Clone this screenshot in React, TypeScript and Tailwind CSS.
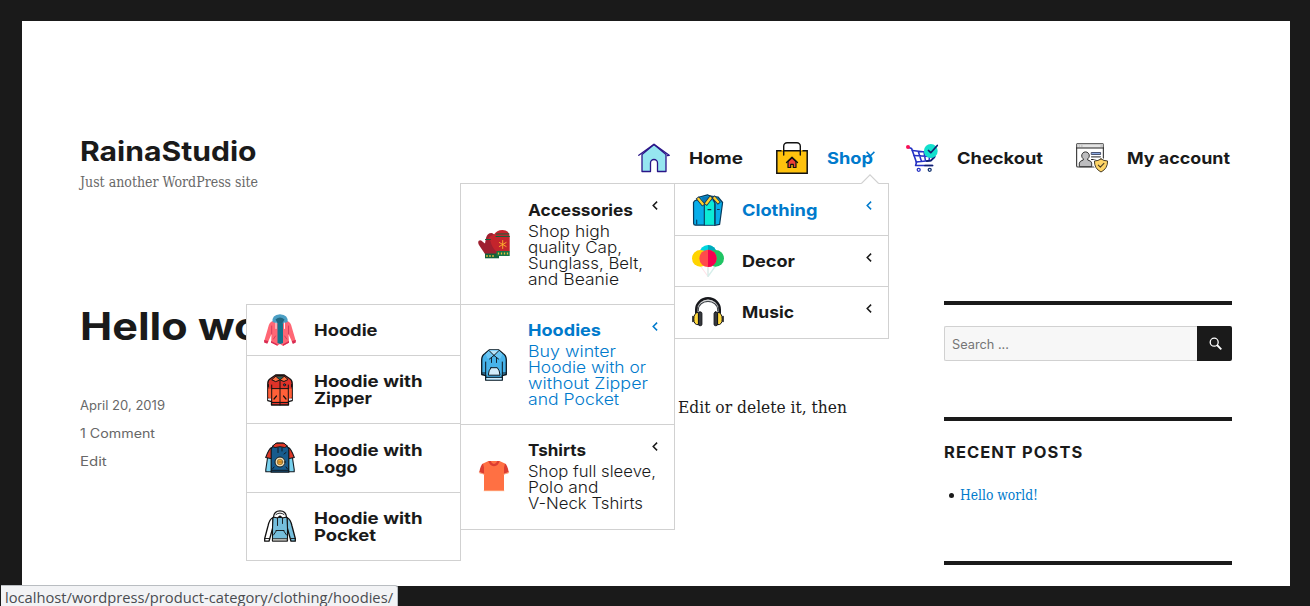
import type { ReactNode } from "react";

function Icon({ children }: { children: ReactNode }) {
  return (
    <svg viewBox="0 0 32 32" className="h-8 w-8 shrink-0" fill="none" strokeLinejoin="round" strokeLinecap="round">
      {children}
    </svg>
  );
}

const HomeIcon = () => (
  <Icon>
    <path d="M4 12.5V29.5H12.5V21a3.5 3.5 0 0 1 7 0v8.5H28V12.5L16 2.5Z" fill="#96e6f0" stroke="#2a1588" strokeWidth="1.3" />
    <path d="M.8 13.3 16 2.2l15.2 11.1-1.8.4" stroke="#2a1588" strokeWidth="1.3" />
  </Icon>
);

const BagIcon = () => (
  <Icon>
    <path d="M.8 8.7h30.4v22.5H.8Z" fill="#ffc20e" stroke="#111" strokeWidth="1.5" strokeLinejoin="miter" />
    <path d="M5.5 8.7h2M24.500 8.7h2" stroke="#ffc20e" strokeWidth="1.6" strokeLinecap="butt" />
    <path d="M7.7 13V4.2A3.4 3.4 0 0 1 11.1.8h9.8a3.4 3.4 0 0 1 3.4 3.4V13" stroke="#111" strokeWidth="1.4" />
    <path d="M12 19.500V25.500h2.700v-3.200h2.600v3.200H20V19.500L16 15.700Z" fill="#ee4036" stroke="#111" strokeWidth="1.200" />
    <path d="m10.500 20.500 5.500-5.300 5.500 5.300" stroke="#111" strokeWidth="1.300" />
  </Icon>
);

const CartIcon = () => (
  <Icon>
    <path d="M2 5.200 5.600 6.600 10.500 20.600 9.600 23.500H26.500" stroke="#2531c4" strokeWidth="1.600" />
    <path d="M6.300 8.500 19 10M28.500 15.500 24.800 18.600 10 20M8 13.500l12 .8 7 .8M12.300 9.500l3.200 10M18 10l1.500 9.200M23.500 15l-.5 3.800" stroke="#2531c4" strokeWidth="1.500" />
    <path d="M19 23.500h7.500M28.800 14.500l-4 4.200-4 .4" stroke="#10206e" strokeWidth="1.700" />
    <circle cx="2" cy="5" r="2" fill="#fa0f54" />
    <circle cx="12.700" cy="27.800" r="1.500" stroke="#2531c4" strokeWidth="1.300" />
    <circle cx="23.700" cy="27.800" r="1.500" stroke="#10306e" strokeWidth="1.300" />
    <circle cx="24.800" cy="9" r="6.900" fill="#12e0cd" />
    <path d="m22.500 8.500 2.300 2.200L31.300 3.500" stroke="#10206e" strokeWidth="1.700" />
  </Icon>
);

const AccountIcon = () => (
  <Icon>
    <rect x=".6" y="1.600" width="26.800" height="23.400" rx="1.300" fill="#fff" stroke="#444" strokeWidth="1.200" />
    <path d="M.8 5.600V3q0-1.300 1.300-1.300H26q1.300 0 1.300 1.300v2.600Z" fill="#c9c9c9" />
    <path d="M.7 6h26.600" stroke="#222" />
    <path d="M2.300 4h.1M4.500 4h.1M7 4h17" stroke="#fff" />
    <path d="M3.300 24.300v-3.200q.5-2.300 4-3.100v-1.200a3.800 3.800 0 1 1 4.400 0V18q3.700.8 4 3.100v3.200Z" fill="#bdbdbf" stroke="#333" strokeWidth="1" />
    <path d="M15.600 10.500h9v2h-9Z" fill="#8ba9e0" stroke="#2b3350" strokeWidth=".8" />
    <path d="M15.500 14.900h9M15.500 17.500h4.500" stroke="#222" />
    <path d="M25 16.800q-3 2-6.800 2 0 8 6.800 11.200 6.800-3.200 6.800-11.200-3.800 0-6.800-2Z" fill="#ffd566" stroke="#fff" strokeWidth="2.500" />
    <path d="M25 17q-3 2-6.600 2 0 7.800 6.600 11 6.600-3.200 6.600-11-3.600 0-6.600-2Z" fill="#ffd566" stroke="#453a25" strokeWidth="1" />
    <path d="m22.300 23.200 2 2 3.600-3.800" stroke="#453a25" strokeWidth="1.100" />
  </Icon>
);

const ShirtsIcon = () => (
  <Icon>
    <path d="M15 1.500 26 3l4.600 5.500-3 21.800-5 1V7Z" fill="#08aeea" stroke="#073a5c" strokeWidth="1.200" />
    <path d="M1.500 8.500Q2 6.500 5 5.800L7.500 3l8-2.200L20 3l2.800 6v20.500q0 1.700-1.200 1.700H3.500q-1.900 0-1.900-1.700Z" fill="#08aeea" stroke="#073a5c" strokeWidth="1.200" />
    <path d="M12.300 11 20 6.500l2.500 3.500v20.700H12.300Z" fill="#0cebd6" />
    <path d="M12.300 11v20M22.800 10v20M4.700 26v4" stroke="#073a5c" strokeWidth="1.100" />
    <path d="m9 3.500 7-1.500 2 1.500-5.500 7Z" fill="#0878b8" />
    <path d="m6.500 5 4 4.800M18.300 4.200l-3.800 5M22.500 4l3.500 4" stroke="#173652" strokeWidth="4" strokeLinecap="square" />
    <path d="m6.500 5 4 4.800M18.300 4.200l-3.800 5M22.500 4l3.500 4" stroke="#ffd02c" strokeWidth="2.300" strokeLinecap="square" />
    <path d="M16 15.700h2.800M25.500 15.500h1.800" stroke="#173652" strokeWidth="1.200" />
  </Icon>
);

const BalloonsIcon = () => (
  <Icon>
    <path d="m8.500 21 7.500 10.500v-11" stroke="#ffe3e8" strokeWidth="1.100" />
    <path d="M16 20.500v11L23.500 21" stroke="#d6eeea" strokeWidth="1.300" />
    <circle cx="16" cy="8.700" r="8.600" fill="#00d6df" />
    <path d="M16 .1a8.600 8.600 0 0 1 0 17.200Z" fill="#00a9bb" />
    <circle cx="8.400" cy="13.400" r="8.400" fill="#ffd400" />
    <circle cx="23.600" cy="13.400" r="8.400" fill="#20c464" />
    <circle cx="16" cy="13.400" r="8.600" fill="#ff4b4b" />
    <path d="M16 4.800a8.600 8.600 0 0 1 0 17.200Z" fill="#f5004f" />
  </Icon>
);

const HeadphonesIcon = () => (
  <Icon>
    <path d="M4.300 17v-3.500a11.700 11.200 0 0 1 23.400 0V17" stroke="#16171b" strokeWidth="2.600" />
    <path d="M6.300 15v-1.500a9.700 8.200 0 0 1 19.400 0V15" stroke="#42464b" strokeWidth="1.200" />
    <path d="M5.500 11A11 9.500 0 0 1 26.500 11" stroke="#a7a9aa" strokeWidth=".5" />
    <path d="M1 20.500v5M31 20.500v5" stroke="#16171b" strokeWidth="1.600" />
    <path d="M6 16.300Q1.800 17 1.800 23T6 28.700ZM26 16.300q4.200.7 4.200 6.700T26 28.700Z" fill="#ffd83c" stroke="#16171b" strokeWidth="1" />
    <rect x="6.500" y="16" width="3.400" height="13.700" rx="1.400" fill="#35383d" stroke="#16171b" />
    <rect x="22.100" y="16" width="3.400" height="13.700" rx="1.400" fill="#35383d" stroke="#16171b" />
  </Icon>
);

const MittensIcon = () => (
  <Icon>
    <path d="M7 26 1.300 17.500Q-.6 14.500.8 12.800 2.700 11 5 14l2 1.500L8 10q1.500-5.500 6.500-4.800L21 10v16Z" fill="#9f2030" />
    <path d="M12.300 12.500Q8.500 11 12 8.500l4-2Q18.500 2 24.500 1.900 31.500 2 31.700 9v14.500H18.500q-4.500-3.500-6.200-11Z" fill="#c4242c" />
    <path d="M7.500 11.500h5M18.500 6l12.500-.1M18 8.500l13.500-.1" stroke="#12613a" strokeWidth="1" />
    <path d="M7 25.500h14v4.800H7Z" fill="#12613a" />
    <path d="M18.500 23h13.200v5H18.500Z" fill="#167545" />
    <path d="M9 27v2M12 27v2M15 27v2M20.500 24.500v2M23.500 24.500v2M26.500 24.500v2M29.500 24.500v2" stroke="#e8bc3b" strokeWidth="1.300" strokeLinecap="butt" />
    <path d="M24.700 12.500v8M21.300 14.500l6.800 4M28.100 14.500l-6.800 4" stroke="#ffb52c" strokeWidth=".9" />
  </Icon>
);

const BlueHoodieIcon = () => (
  <Icon>
    <path d="m11.500 .8 9 0 4.500 3.700q3.300 2 3.300 6.500v14.500l-4 1V31.200H7.700V26.500l-4-1V11Q3.700 6.500 7 4.500Z" fill="#47b3ea" stroke="#0b1720" strokeWidth="1.300" />
    <path d="M8.300 29h15.400v1.600H8.300Z" fill="#d3edfa" />
    <path d="M4 24h3.500M24.500 24H28M7.700 13v14M24.300 13v14M7.700 28.300h16.600" stroke="#0b1720" strokeWidth="1" />
    <path d="M7.500 5 11.500 1h9l4 4-2 4.500h-4L16 6.800l-2.500 2.700h-4Z" fill="#6cc6f3" />
    <path d="M11 1.800h10L16 6.500Z" fill="#b9e3f6" />
    <path d="m11 1.500 5 5 5-5M16 6.500 11.500 10M16 6.500l4.500 3.500" stroke="#0b1720" strokeWidth="1" />
    <path d="M13.500 9v4.500M18.500 9v4.500" stroke="#0b1720" strokeWidth=".9" />
    <path d="M13 18.700h6.300q2.400 2.500 2.700 7.500H10.300q.2-5 2.700-7.500Z" fill="#d3edfa" stroke="#0b1720" strokeWidth="1" />
  </Icon>
);

const TshirtIcon = () => (
  <Icon>
    <path d="M10.500 1 5 3.500 1 13l5 1.500V31h20V14.500l5-1.500L27 3.500 21.500 1Z" fill="#ff7043" />
    <path d="M5 3.500Q2.500 5 1.300 12.200L6 14V7.500ZM27 3.500q2.500 1.500 3.700 8.700L26 14V7.500ZM10.500 1q1 5 5.500 5.200Q20.500 6 21.500 1h-2.300q-.7 2.800-3.200 2.900Q13.500 3.800 12.800 1Z" fill="#dc3d31" />
    <path d="m1.200 12.400 4.800 1.800M30.800 12.400 26 14.200M6 30.800h20" stroke="#ffc29b" strokeWidth=".7" />
  </Icon>
);

const PinkHoodieIcon = () => (
  <Icon>
    <path d="M9 7q-4 1-5 7L.2 27l3.500 2L7.500 20l-.3 8 6 3.800L16 30l3 2 6-3.500-.5-8.500 4 9 3.300-2L28 14q-1-6-5-7l-7-2Z" fill="#ff6775" />
    <path d="m.2 26-.1 2.500 3.200 1.300 1-2.800Zm31.600 0v2.500l-3 1.500-1-3ZM7 27l6.500 3.300v1.500l-6.500-3Zm18 0-6 3.300v1.500l6-3Z" fill="#d92c52" />
    <path d="M7.700 20V12M24.500 20V12M9.500 25l2-3M22.700 25l-2-3" stroke="#cc3655" strokeWidth=".8" />
    <path d="M13.500 7h5.500v22l-2.500 1-3-1Z" fill="#13748d" />
    <path d="M8.500 8Q7.500 1 16 .2 24.500 1 23.700 8l-5 1.500L16 5.500 13.300 9.500Z" fill="#4b9fc4" />
    <path d="M11.500 5.500Q16 1.500 20.500 5.500L18.500 9h-5Z" fill="#23677f" />
    <path d="M12 9v5.500M20.500 9v5.500" stroke="#fff" strokeWidth=".9" />
  </Icon>
);

const ZipperHoodieIcon = () => (
  <Icon>
    <path d="M6.500 4.500 12 .8h8l5.500 3.700q2.700 1.500 2.700 5v17L24.500 27.500V31h-17V27.500L3.800 26.500v-17q0-3.500 2.700-5Z" fill="#df3329" stroke="#131313" strokeWidth="1.300" />
    <path d="M7.700 14.500h16.600v13H7.700Z" fill="#ff6038" />
    <path d="m4.200 14.500 3.500.5v9l-3.500-.5ZM27.800 14.500l-3.500.5v9l3.500-.5Z" fill="#ff6038" />
    <path d="M4 24.500h3v2.300L4 26ZM28 24.500h-3v2.300l3-.8Z" fill="#dcf0f7" />
    <path d="M7.700 11v17M24.300 11v17M8 14.600h16.300M8 28.500h16M16 7v24" stroke="#131313" strokeWidth="1" />
    <path d="m8 5.500 4.500-4h7l4.500 4-4 2L16 6 12 7.500Z" fill="#ff7040" stroke="#131313" strokeWidth="1" />
    <path d="m12 2.500 4 3.500 4-3.500Z" fill="#225b52" stroke="#131313" strokeWidth=".8" />
    <path d="m10 25 2.500-3M22 25l-2.500-3M4.300 10.500v2M27.700 10.500v2" stroke="#131313" strokeWidth="1.200" />
    <circle cx="20.500" cy="10.800" r="1.100" fill="#3b597b" stroke="#131313" strokeWidth=".8" />
  </Icon>
);

const LogoHoodieIcon = () => (
  <Icon>
    <path d="m3.800 14-2 13.500v2.200h5.500l2-13ZM28.200 14l2 13.500v2.200h-5.500l-2-13Z" fill="#79d2ef" stroke="#121a21" strokeWidth="1.100" />
    <path d="M7.500 5.500Q5 6.500 1.700 15.500l6 1.300ZM24.500 5.500q2.500 1 5.800 10l-6 1.300Z" fill="#dd3827" stroke="#121a21" strokeWidth="1.100" />
    <path d="m9 4 4-2.800h6L23 4l1.800 3v23.200H7.200V7Z" fill="#175b8d" stroke="#121a21" strokeWidth="1.200" />
    <path d="M8.500 4.200 12 1.200h8l3.500 3-3 1.300-4.500-.8-4.500.8Z" fill="#dd3827" stroke="#121a21" strokeWidth="1" />
    <path d="M14 6v4.500M18 6v3M7.500 28.300h17M20 12l2-1.500M10 25l-1.500 2M22 25l1.500 2" stroke="#121a21" strokeWidth="1" />
    <circle cx="16" cy="20" r="5" fill="#f7e5bd" stroke="#121a21" strokeWidth="1" />
    <circle cx="16" cy="20" r="2.800" fill="#efa62b" stroke="#6b5a37" strokeWidth=".7" />
    <path d="M14.500 20h3" stroke="#834d20" strokeWidth=".7" />
  </Icon>
);

const PocketHoodieIcon = () => (
  <Icon>
    <path d="M9 7.500Q5.500 9 4 16L.7 28.500v2.700H5L8.700 18Z" fill="#fff" stroke="#111" strokeWidth="1.300" />
    <path d="M23 7.500Q26.500 9 28 16l3.300 12.500v2.700H27L23.300 18Z" fill="#75bedc" stroke="#111" strokeWidth="1.300" />
    <path d="M9 7.500h14l.5 11V31h-15V18.500Z" fill="#75bedc" stroke="#111" strokeWidth="1.100" />
    <path d="M8.800 28.700h14.400V31H8.800Z" fill="#d2d3ce" stroke="#111" strokeWidth=".8" />
    <path d="M9.500 7Q10 .8 16 .8T22.500 7L18.500 8 16 6l-2.500 2Z" fill="#fff" stroke="#111" strokeWidth="1.200" />
    <path d="M12 4.500Q16 1.500 20 4.500M13.500 8.500v7M18.500 8.500v5M12 20.500h8M9.500 25l2.700-4M22.500 25l-2.700-4M.8 28.500h4.500M27 28.500h4.300" stroke="#111" strokeWidth=".9" />
  </Icon>
);

function Chevron({ active }: { active?: boolean }) {
  return (
    <svg
      viewBox="0 0 6 9"
      className={`absolute right-4 top-[17px] h-[9px] w-[6px] ${active ? "text-[#007acc]" : "text-[#1a1a1a]"}`}
      fill="none"
    >
      <path d="M5.100 .6 1.200 4.500 5.100 8.400" stroke="currentColor" strokeWidth="1.500" />
    </svg>
  );
}

function T({ s, children }: { s: string; children: ReactNode }) {
  return <span className={`block w-max origin-left whitespace-nowrap ${s}`}>{children}</span>;
}

type Line = [string, string];

function Row({
  icon,
  iconPad,
  textPad = "pt-[17px]",
  title,
  desc = [],
  active,
  arrow,
}: {
  icon: ReactNode;
  iconPad: string;
  textPad?: string;
  title: Line[];
  desc?: Line[];
  active?: boolean;
  arrow?: boolean;
}) {
  return (
    <li
      className={`relative flex items-start gap-[18px] border-b border-[#d1d1d1] pl-[17px] ${active ? "text-[#007acc]" : "text-[#1a1a1a]"}`}
    >
      <div className={`shrink-0 ${iconPad}`}>{icon}</div>
      <div className={textPad}>
        <div className="text-[16.5px] leading-[17px] font-bold">
          {title.map(([text, s]) => (
            <T key={text} s={s}>{text}</T>
          ))}
        </div>
        {desc.length > 0 && (
          <div className="mt-[5px] text-[15.5px] leading-4 font-light">
            {desc.map(([text, s]) => (
              <T key={text} s={s}>{text}</T>
            ))}
          </div>
        )}
      </div>
      {arrow && <Chevron active={active} />}
    </li>
  );
}

const menuBase = "absolute z-10 grid w-[215px] border border-b-0 border-[#d1d1d1] bg-white";

export default function App() {
  return (
    <div className="relative h-[606px] w-[1310px] overflow-hidden bg-[#1a1a1a] pt-[21px] pr-5 pb-5 pl-[22px] font-['Inter',sans-serif] text-[#1a1a1a]">
      <div className="h-[565px] bg-white pl-[58px] pr-[58px]">
        <header className="flex justify-between pt-[114px]">
          <div>
            <h1 className="text-[27px] leading-[34px] font-bold">
              <T s="scale-x-[1.115]">RainaStudio</T>
            </h1>
            <p className="mt-[3px] font-['DejaVu_Serif_Condensed','DejaVu_Serif',serif] text-[14px] leading-[20px] text-[#686868] [font-stretch:condensed]">
              <T s="scale-x-[1]">Just another WordPress site</T>
            </p>
          </div>
          <nav className="mr-[2px] mt-[7px] flex h-8 text-[16.5px] leading-8 font-bold">
            <a className="flex w-[138px] gap-[19px]">
              <HomeIcon />
              <T s="scale-x-[1.141]">Home</T>
            </a>
            <a className="relative flex w-[130px] gap-[19px] text-[#007acc]">
              <BagIcon />
              <T s="scale-x-[1.106]">Shop</T>
              <svg viewBox="0 0 9 6" className="absolute left-[90px] top-[9px] h-[6px] w-[9px]" fill="none">
                <path d="M.6 .9 4.500 4.800 8.400 .9" stroke="currentColor" strokeWidth="1.500" />
              </svg>
            </a>
            <a className="flex w-[170px] gap-[19px]">
              <CartIcon />
              <T s="scale-x-[1.107]">Checkout</T>
            </a>
            <a className="flex w-[154px] gap-[19px]">
              <AccountIcon />
              <T s="scale-x-[1.083]">My account</T>
            </a>
          </nav>
        </header>

        <div className="flex pt-[109px]">
          <main className="w-[864px] pt-px">
            <h2 className="text-[38.500px] leading-[48px] font-bold">
              <T s="scale-x-[1.120]">Hello world!</T>
            </h2>
            <div className="mt-[42px] flex">
              <div className="w-[598px] text-[12.500px] leading-[28px] text-[#686868]">
                <T s="scale-x-[1.044]">April 20, 2019</T>
                <T s="scale-x-[1.138]">1 Comment</T>
                <T s="scale-x-[1.200]">Edit</T>
              </div>
              <p className="pt-px font-['DejaVu_Serif_Condensed','DejaVu_Serif',serif] text-[17px] leading-[28px] [font-stretch:condensed]">
                <T s="scale-x-[1.014]">Edit or delete it, then</T>
              </p>
            </div>
          </main>
          <aside className="w-[288px]">
            <section className="h-[116px] border-t-4 border-[#1a1a1a] pt-[21px]">
              <div className="flex h-[35px]">
                <div className="flex-1 rounded-l-[2px] border border-r-0 border-[#d1d1d1] bg-[#f7f7f7] pl-[7px] text-[12.500px] leading-[35px] text-[#757575]">
                  <T s="scale-x-[1.021]">Search ...</T>
                </div>
                <div className="flex w-[35px] items-center justify-center rounded-r-[2px] bg-[#1a1a1a]">
                  <svg viewBox="0 0 13 13" className="ml-[2px] h-[13px] w-[13px]" fill="none" stroke="#fff">
                    <circle cx="5.200" cy="5.200" r="4" strokeWidth="1.300" />
                    <path d="m8 8 4.300 4.300" strokeWidth="1.800" />
                  </svg>
                </div>
              </div>
            </section>
            <section className="h-[144px] border-t-4 border-[#1a1a1a] pt-[22px]">
              <h3 className="text-[15.500px] leading-[20px] font-bold tracking-[1px]">
                <T s="scale-x-[1.064]">RECENT POSTS</T>
              </h3>
              <div className="mt-[22px] flex items-center gap-[6px] pl-[5px] font-['DejaVu_Serif_Condensed','DejaVu_Serif',serif] text-[14px] leading-[20px] [font-stretch:condensed]">
                <span className="h-[5px] w-[5px] rounded-full bg-[#1a1a1a]" />
                <span className="text-[#007acc]">
                  <T s="scale-x-[0.980]">Hello world!</T>
                </span>
              </div>
            </section>
            <div className="h-1 bg-[#1a1a1a]" />
          </aside>
        </div>
      </div>

      <ul className={`${menuBase} left-[674px] top-[183px] grid-rows-[52px_51px_52px]`}>
        <Row icon={<ShirtsIcon />} iconPad="pt-[10px]" textPad="pt-[18px]" title={[["Clothing", "scale-x-[1.105]"]]} active arrow />
        <Row icon={<BalloonsIcon />} iconPad="pt-[9px]" title={[["Decor", "scale-x-[1.097]"]]} arrow />
        <Row icon={<HeadphonesIcon />} iconPad="pt-[9px]" title={[["Music", "scale-x-[1.060]"]]} arrow />
      </ul>
      <svg viewBox="0 0 18 10" className="absolute left-[861px] top-[174px] z-20 h-[10px] w-[18px]">
        <path d="M0 10 9 1l9 9Z" fill="#fff" />
        <path d="M.3 9.500 9 .9l8.700 8.600" fill="none" stroke="#d1d1d1" strokeWidth="1.200" />
      </svg>

      <ul className={`${menuBase} left-[460px] top-[183px] grid-rows-[121px_120px_105px]`}>
        <Row
          icon={<MittensIcon />}
          iconPad="pt-[44px]"
          textPad="pt-[18px]"
          title={[["Accessories", "scale-x-[1.048]"]]}
          desc={[
            ["Shop high", "scale-x-[1.123]"],
            ["quality Cap,", "scale-x-[1.097]"],
            ["Sunglass, Belt,", "scale-x-[1.083]"],
            ["and Beanie", "scale-x-[1.127]"],
          ]}
          arrow
        />
        <Row
          icon={<BlueHoodieIcon />}
          iconPad="pt-[44px]"
          title={[["Hoodies", "scale-x-[1.097]"]]}
          desc={[
            ["Buy winter", "scale-x-[1.149]"],
            ["Hoodie with or", "scale-x-[1.121]"],
            ["without Zipper", "scale-x-[1.156]"],
            ["and Pocket", "scale-x-[1.135]"],
          ]}
          active
          arrow
        />
        <Row
          icon={<TshirtIcon />}
          iconPad="pt-[35px]"
          title={[["Tshirts", "scale-x-[1.036]"]]}
          desc={[
            ["Shop full sleeve,", "scale-x-[1.077]"],
            ["Polo and", "scale-x-[1.120]"],
            ["V-Neck Tshirts", "scale-x-[1.081]"],
          ]}
          arrow
        />
      </ul>

      <ul className={`${menuBase} left-[246px] top-[304px] grid-rows-[51px_68px_69px_68px]`}>
        <Row icon={<PinkHoodieIcon />} iconPad="pt-[9px]" title={[["Hoodie", "scale-x-[1.109]"]]} />
        <Row icon={<ZipperHoodieIcon />} iconPad="pt-[18px]" title={[["Hoodie with", "scale-x-[1.130]"], ["Zipper", "scale-x-[1.099]"]]} />
        <Row icon={<LogoHoodieIcon />} iconPad="pt-[18px]" textPad="pt-[18px]" title={[["Hoodie with", "scale-x-[1.130]"], ["Logo", "scale-x-[1.087]"]]} />
        <Row icon={<PocketHoodieIcon />} iconPad="pt-[17px]" title={[["Hoodie with", "scale-x-[1.130]"], ["Pocket", "scale-x-[1.118]"]]} />
      </ul>

      <div className="absolute bottom-0 left-px z-30 h-[21px] w-[397px] rounded-tr-[3px] border-t border-r border-[#b9bdc1] bg-[#f2f3f5] pl-1 font-['Open_Sans','Noto_Sans',sans-serif] text-[15px] leading-[22px] text-[#4a4c50]">
        <T s="scale-x-[0.980]">localhost/wordpress/product-category/clothing/hoodies/</T>
      </div>
    </div>
  );
}
